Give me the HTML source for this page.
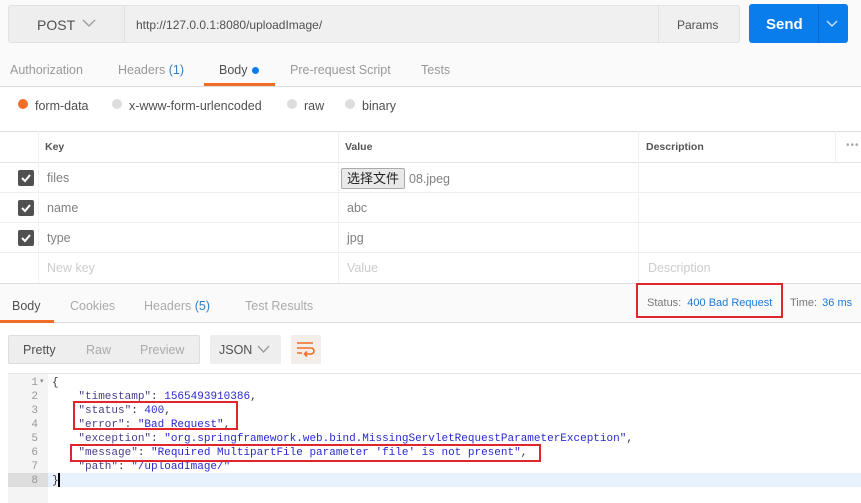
<!DOCTYPE html>
<html><head><meta charset="utf-8"><style>
*{margin:0;padding:0;box-sizing:border-box}
body{width:861px;height:503px;overflow:hidden;background:#fff;font-family:"Liberation Sans","Noto Sans CJK SC",sans-serif;font-size:12px;color:#505050;position:relative}
.a{position:absolute}
.g{color:#808080}
.mono{font-family:"Liberation Mono","DejaVu Sans Mono",monospace;font-size:11px}
.red{position:absolute;border:2px solid #e0262c}
.k{color:#4b3f87}.v{color:#2a2ad0}
</style></head><body>
<div class="a" style="left:0;top:0;width:861px;height:131px;background:#fafafa"></div>
<div class="a" style="left:8px;top:5px;width:117px;height:38px;background:#eee;border:1px solid #e2e2e2;border-radius:3px 0 0 3px"></div>
<div class="a" style="left:37px;top:17px;font-size:14px;color:#505050">POST</div>
<svg class="a" style="left:82px;top:18px" width="14" height="10"><path d="M1 2 L7 8 L13 2" stroke="#999" fill="none" stroke-width="1.3"/></svg>
<div class="a" style="left:124px;top:5px;width:535px;height:38px;background:#f0f0f0;border:1px solid #e2e2e2"></div>
<div class="a" style="left:136px;top:18px;font-size:12px;color:#505050">http://127.0.0.1:8080/uploadImage/</div>
<div class="a" style="left:658px;top:5px;width:82px;height:38px;background:#f0f0f0;border:1px solid #e2e2e2;border-radius:0 3px 3px 0"></div>
<div class="a" style="left:677px;top:18px;font-size:12px">Params</div>
<div class="a" style="left:749px;top:4px;width:99px;height:39px;background:#0a7ded;border-radius:3px"></div>
<div class="a" style="left:818px;top:4px;width:1px;height:39px;background:#0869ce"></div>
<div class="a" style="left:766px;top:16px;font-size:15px;font-weight:bold;color:#fff">Send</div>
<svg class="a" style="left:826px;top:20px" width="12" height="8"><path d="M1 1 L6 6 L11 1" stroke="#cfe4fb" fill="none" stroke-width="1.4"/></svg>
<div class="a" style="left:10px;top:63px;color:#999;font-size:12.5px">Authorization</div>
<div class="a" style="left:118px;top:63px;color:#999;font-size:12.5px">Headers <span style="color:#2f7fc8">(1)</span></div>
<div class="a" style="left:219px;top:63px;color:#505050;font-size:12.5px">Body</div>
<div class="a" style="left:252px;top:67px;width:7px;height:7px;border-radius:50%;background:#0a7ded"></div>
<div class="a" style="left:204px;top:83px;width:71px;height:3px;background:#f06d27"></div>
<div class="a" style="left:290px;top:63px;color:#999;font-size:12.5px">Pre-request Script</div>
<div class="a" style="left:421px;top:63px;color:#999;font-size:12.5px">Tests</div>
<div class="a" style="left:0;top:86px;width:861px;height:1px;background:#ddd"></div>
<div class="a" style="left:0;top:87px;width:861px;height:44px;background:#fff"></div>
<div class="a" style="left:18px;top:99px;width:10px;height:10px;border-radius:50%;background:#f06d27"></div>
<div class="a" style="left:35px;top:99px;font-size:12.5px">form-data</div>
<div class="a" style="left:112px;top:99px;width:10px;height:10px;border-radius:50%;background:#ddd"></div>
<div class="a" style="left:129px;top:99px;font-size:12.5px">x-www-form-urlencoded</div>
<div class="a" style="left:287px;top:99px;width:10px;height:10px;border-radius:50%;background:#ddd"></div>
<div class="a" style="left:304px;top:99px;font-size:12.5px">raw</div>
<div class="a" style="left:345px;top:99px;width:10px;height:10px;border-radius:50%;background:#ddd"></div>
<div class="a" style="left:362px;top:99px;font-size:12.5px">binary</div>
<div class="a" style="left:0;top:131px;width:861px;height:1px;background:#ddd"></div>
<div class="a" style="left:0;top:162px;width:861px;height:1px;background:#e4e4e4"></div>
<div class="a" style="left:0;top:192px;width:861px;height:1px;background:#efefef"></div>
<div class="a" style="left:0;top:222px;width:861px;height:1px;background:#efefef"></div>
<div class="a" style="left:0;top:252px;width:861px;height:1px;background:#efefef"></div>
<div class="a" style="left:0;top:283px;width:861px;height:1px;background:#ddd"></div>
<div class="a" style="left:38px;top:131px;width:1px;height:152px;background:#f2f2f2"></div>
<div class="a" style="left:338px;top:131px;width:1px;height:152px;background:#f0f0f0"></div>
<div class="a" style="left:638px;top:131px;width:1px;height:152px;background:#f0f0f0"></div>
<div class="a" style="left:835px;top:131px;width:1px;height:31px;background:#f0f0f0"></div>
<div class="a" style="left:45px;top:141px;font-size:10.5px;font-weight:bold;color:#555">Key</div>
<div class="a" style="left:345px;top:141px;font-size:10.5px;font-weight:bold;color:#555">Value</div>
<div class="a" style="left:646px;top:141px;font-size:10.5px;font-weight:bold;color:#555">Description</div>
<div class="a" style="left:846px;top:140px;font-size:10px;color:#aaa;letter-spacing:1px">•••</div>
<svg class="a" style="left:18px;top:170px" width="16" height="16"><rect width="16" height="16" rx="2" fill="#505050"/><path d="M4 8 L7 11 L12 5" stroke="#fff" stroke-width="2" fill="none"/></svg>
<svg class="a" style="left:18px;top:200px" width="16" height="16"><rect width="16" height="16" rx="2" fill="#505050"/><path d="M4 8 L7 11 L12 5" stroke="#fff" stroke-width="2" fill="none"/></svg>
<svg class="a" style="left:18px;top:230px" width="16" height="16"><rect width="16" height="16" rx="2" fill="#505050"/><path d="M4 8 L7 11 L12 5" stroke="#fff" stroke-width="2" fill="none"/></svg>
<div class="a g" style="left:47px;top:171px;font-size:12.5px">files</div>
<div class="a g" style="left:47px;top:201px;font-size:12.5px">name</div>
<div class="a g" style="left:47px;top:231px;font-size:12.5px">type</div>
<div class="a" style="left:47px;top:261px;font-size:12.5px;color:#ccc">New key</div>
<div class="a" style="left:341px;top:168px;width:64px;height:21px;background:#e9e9e9;border:1px solid #aaa;border-radius:2px;font-size:13px;color:#222;text-align:center;line-height:19px">选择文件</div>
<div class="a g" style="left:409px;top:172px;font-size:12.5px">08.jpeg</div>
<div class="a g" style="left:347px;top:201px;font-size:12.5px">abc</div>
<div class="a g" style="left:347px;top:231px;font-size:12.5px">jpg</div>
<div class="a" style="left:347px;top:261px;font-size:12.5px;color:#ccc">Value</div>
<div class="a" style="left:648px;top:261px;font-size:12.5px;color:#ccc">Description</div>
<div class="a" style="left:0;top:284px;width:861px;height:39px;background:#fafafa"></div>
<div class="a" style="left:0;top:322px;width:861px;height:1px;background:#ddd"></div>
<div class="a" style="left:12px;top:299px;font-size:12.5px;color:#505050">Body</div>
<div class="a" style="left:0;top:320px;width:54px;height:3px;background:#f06d27"></div>
<div class="a" style="left:70px;top:299px;font-size:12.5px;color:#aaa">Cookies</div>
<div class="a" style="left:144px;top:299px;font-size:12.5px;color:#aaa">Headers <span style="color:#2f7fc8">(5)</span></div>
<div class="a" style="left:245px;top:299px;font-size:12.5px;color:#aaa">Test Results</div>
<div class="a" style="left:647px;top:297px;font-size:11px;color:#777">Status: <span style="color:#1e78d6;margin-left:3px">400 Bad Request</span></div>
<div class="a" style="left:790px;top:297px;font-size:11px;color:#777">Time: <span style="color:#1e78d6;margin-left:2px">36 ms</span></div>
<div class="red" style="left:636px;top:283px;width:147px;height:35px"></div>
<div class="a" style="left:8px;top:335px;width:192px;height:29px;background:#eee;border:1px solid #ddd;border-radius:2px"></div>
<div class="a" style="left:23px;top:343px;font-size:12.5px;color:#505050">Pretty</div>
<div class="a" style="left:86px;top:343px;font-size:12.5px;color:#aaa">Raw</div>
<div class="a" style="left:140px;top:343px;font-size:12.5px;color:#aaa">Preview</div>
<div class="a" style="left:210px;top:335px;width:71px;height:29px;background:#eee;border-radius:2px"></div>
<div class="a" style="left:219px;top:343px;font-size:12.5px;color:#505050">JSON</div>
<svg class="a" style="left:257px;top:345px" width="13" height="9"><path d="M1 1 L6.5 7 L12 1" stroke="#999" fill="none" stroke-width="1.3"/></svg>
<div class="a" style="left:291px;top:335px;width:30px;height:29px;background:#f3eeea;border-radius:2px"></div>
<svg class="a" style="left:296px;top:341px" width="20" height="16"><path d="M1 2 H17 M1 7 H15 a3 3 0 0 1 0 6 H9 M11 10.5 L8.5 13 L11 15.5 M1 12 H6" stroke="#f06d27" fill="none" stroke-width="1.6"/></svg>
<div class="a" style="left:8px;top:373px;width:853px;height:1px;background:#e4e4e4"></div>
<div class="a" style="left:8px;top:374px;width:40px;height:129px;background:#f4f4f4"></div>
<div class="a" style="left:8px;top:473px;width:40px;height:14px;background:#ddd"></div>
<div class="a" style="left:48px;top:473px;width:813px;height:14px;background:#e8f2ff"></div>
<div class="a mono" style="left:0;top:376px;width:38px;text-align:right;line-height:14px;color:#999">1<br>2<br>3<br>4<br>5<br>6<br>7<br>8</div>
<div class="a" style="left:40px;top:377px;font-size:7px;color:#888">▾</div>
<div class="a mono" style="left:52px;top:376px;line-height:14px;color:#333;white-space:pre">{
    <span class="k">"timestamp"</span>: <span class="v">1565493910386</span>,
    <span class="k">"status"</span>: <span class="v">400</span>,
    <span class="k">"error"</span>: <span class="v">"Bad Request"</span>,
    <span class="k">"exception"</span>: <span class="v">"org.springframework.web.bind.MissingServletRequestParameterException"</span>,
    <span class="k">"message"</span>: <span class="v">"Required MultipartFile parameter 'file' is not present"</span>,
    <span class="k">"path"</span>: <span class="v">"/uploadImage/"</span>
}</div>
<div class="a" style="left:58px;top:473px;width:2px;height:14px;background:#000"></div>
<div class="red" style="left:73px;top:401px;width:165px;height:29px"></div>
<div class="red" style="left:70px;top:444px;width:471px;height:18px"></div>
</body></html>
